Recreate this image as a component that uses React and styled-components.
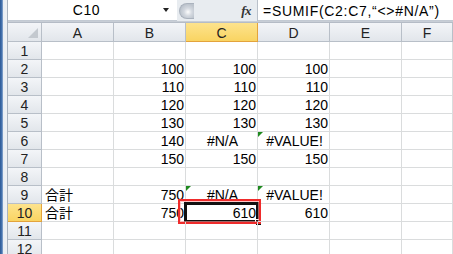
import React from "react";
import styled, { createGlobalStyle } from "styled-components";

const GlobalStyle = createGlobalStyle`
  html, body {
    margin: 0;
    padding: 0;
    background: #fff;
  }
  body {
    font-family: "Liberation Sans", "Noto Sans CJK JP", sans-serif;
  }
`;

const Frame = styled.div`
  display: flex;
  width: 453px;
  height: 254px;
  overflow: hidden;
  background: #fff;
`;

const SideBar = styled.div`
  flex: 0 0 8px;
  background: linear-gradient(
    to right,
    #2c5894 0px,
    #4a78b4 2px,
    #9fb6d4 3px,
    #e9edf2 3px,
    #eef1f5 7px,
    #a9b3bf 7px
  );
`;

const Main = styled.div`
  flex: 1;
  display: flex;
  flex-direction: column;
  min-width: 0;
`;

const FormulaRow = styled.div`
  display: flex;
  height: 21px;
  background: #e8ecf0;
  font-size: 14px;
  color: #000;
`;

const NameBox = styled.div`
  flex: 0 0 169px;
  display: flex;
  align-items: center;
  background: #fff;
  border-bottom: 1px solid #c3cad3;
  box-sizing: border-box;
`;

const NameText = styled.div`
  flex: 1;
  text-align: center;
  line-height: 21px;
  padding-left: 2px;
  letter-spacing: 0.6px;
`;

const DropArrow = styled.div`
  width: 0;
  height: 0;
  margin: 0 8px 0 0;
  border-left: 3px solid transparent;
  border-right: 3px solid transparent;
  border-top: 4px solid #222;
`;

const Knob = styled.div`
  flex: 0 0 14px;
  margin: 3px 0 2px 2px;
  border-radius: 8px 0 0 8px;
  border: 1px solid #aab2bd;
  border-right: none;
  background: radial-gradient(circle at 8px 8px, #fdfdfd 0px, #d3d8df 4px, #bcc3cc 8px);
`;

const FxArea = styled.div`
  flex: 0 0 64px;
  display: flex;
  align-items: center;
  justify-content: flex-end;
  padding-right: 6px;
  box-sizing: border-box;
  border-right: 1px solid #b9c0c9;
`;

const Fx = styled.span`
  font-family: "Liberation Serif", "DejaVu Serif", serif;
  font-style: italic;
  font-weight: bold;
  font-size: 13px;
  color: #333;
  letter-spacing: -0.5px;
`;

const FormulaInput = styled.div`
  flex: 1;
  background: #fff;
  padding-left: 5px;
  line-height: 22px;
  white-space: nowrap;
  letter-spacing: 0.7px;
  border-bottom: 1px solid #c3cad3;
`;

const Divider = styled.div`
  height: 4px;
  box-sizing: border-box;
  background: #fff;
  border-top: 1px solid #c8ced6;
  border-bottom: 1px solid #b5bcc6;
`;

const Sheet = styled.div`
  display: grid;
  grid-template-columns: 34px repeat(5, 72px) 1fr;
  grid-template-rows: 19px;
  grid-auto-rows: 18px;
  font-size: 14px;
  color: #000;
`;

const HeadCell = styled.div`
  box-sizing: border-box;
  border-right: 1px solid ${(p) => (p.$active ? "#e3a33c" : "#b8bfc8")};
  border-bottom: 1px solid ${(p) => (p.$active ? "#e3a33c" : "#b8bfc8")};
  background: ${(p) =>
    p.$active
      ? "linear-gradient(#fde38d, #f9d462)"
      : "linear-gradient(#f3f5f8, #e2e6eb)"};
  text-align: center;
  line-height: 18px;
  padding-top: 1px;
  color: #222;
  overflow: hidden;
`;

const Corner = styled(HeadCell)`
  position: relative;
  &::after {
    content: "";
    position: absolute;
    right: 3px;
    bottom: 3px;
    width: 0;
    height: 0;
    border-left: 10px solid transparent;
    border-bottom: 10px solid #c4c9cf;
  }
`;

const RowHead = styled(HeadCell)`
  line-height: 17px;
  padding-top: 1px;
`;

const Cell = styled.div`
  position: relative;
  box-sizing: border-box;
  border-right: 1px solid #dadcdd;
  border-bottom: 1px solid #dadcdd;
  text-align: ${(p) => p.$align};
  padding: 1px 1px 0 3px;
  line-height: 17px;
  white-space: nowrap;
  font-family: "Liberation Sans", "Noto Sans CJK JP", sans-serif;

  ${(p) =>
    p.$flag &&
    `
    &::before {
      content: "";
      position: absolute;
      left: 0;
      top: 0;
      border-top: 5px solid #1f8a1f;
      border-right: 5px solid transparent;
    }
  `}
`;

const Selection = styled.div`
  position: absolute;
  left: -2px;
  top: -2px;
  right: -2px;
  bottom: -2px;
  border: 3px solid #111;
  pointer-events: none;
`;

const FillHandle = styled.div`
  position: absolute;
  right: -5px;
  bottom: -5px;
  width: 5px;
  height: 5px;
  background: #111;
  border: 1px solid #fff;
`;

const Annotation = styled.div`
  position: absolute;
  left: -8px;
  top: -5px;
  right: -4px;
  bottom: -3px;
  border: 2px solid #ef2b2b;
  box-shadow: inset 0 0 0 1px rgba(255, 160, 160, 0.6);
  pointer-events: none;
`;

const columns = ["A", "B", "C", "D", "E", "F"];

const rows = [
  [],
  ["", 100, 100, 100],
  ["", 110, 110, 110],
  ["", 120, 120, 120],
  ["", 130, 130, 130],
  ["", 140, "#N/A", "#VALUE!"],
  ["", 150, 150, 150],
  [],
  ["合計", 750, "#N/A", "#VALUE!"],
  ["合計", 750, 610, 610],
  [],
  [],
];

// cells with the green error marker in the corner
const flagged = ["D6", "C9", "D9"];

const alignOf = (v) => {
  if (typeof v === "number") return "right";
  if (typeof v === "string" && v.startsWith("#")) return "center";
  return "left";
};

const App = () => {
  return (
    <>
      <GlobalStyle />
      <Frame>
        <SideBar />
        <Main>
          <FormulaRow>
            <NameBox>
              <NameText>C10</NameText>
              <DropArrow />
            </NameBox>
            <Knob />
            <FxArea>
              <Fx>fx</Fx>
            </FxArea>
            <FormulaInput>=SUMIF(C2:C7,“&lt;&gt;#N/A”)</FormulaInput>
          </FormulaRow>
          <Divider />
          <Sheet>
            <Corner />
            {columns.map((c) => (
              <HeadCell key={c} $active={c === "C"}>
                {c}
              </HeadCell>
            ))}
            {rows.map((row, r) => {
              const rowNo = r + 1;
              return (
                <React.Fragment key={rowNo}>
                  <RowHead $active={rowNo === 10}>{rowNo}</RowHead>
                  {columns.map((c, ci) => {
                    const v = row[ci] ?? "";
                    const id = `${c}${rowNo}`;
                    const selected = id === "C10";
                    return (
                      <Cell key={id} $align={alignOf(v)} $flag={flagged.includes(id)}>
                        {v}
                        {selected && (
                          <>
                            <Selection />
                            <FillHandle />
                            <Annotation />
                          </>
                        )}
                      </Cell>
                    );
                  })}
                </React.Fragment>
              );
            })}
          </Sheet>
        </Main>
      </Frame>
    </>
  );
};

export default App;
